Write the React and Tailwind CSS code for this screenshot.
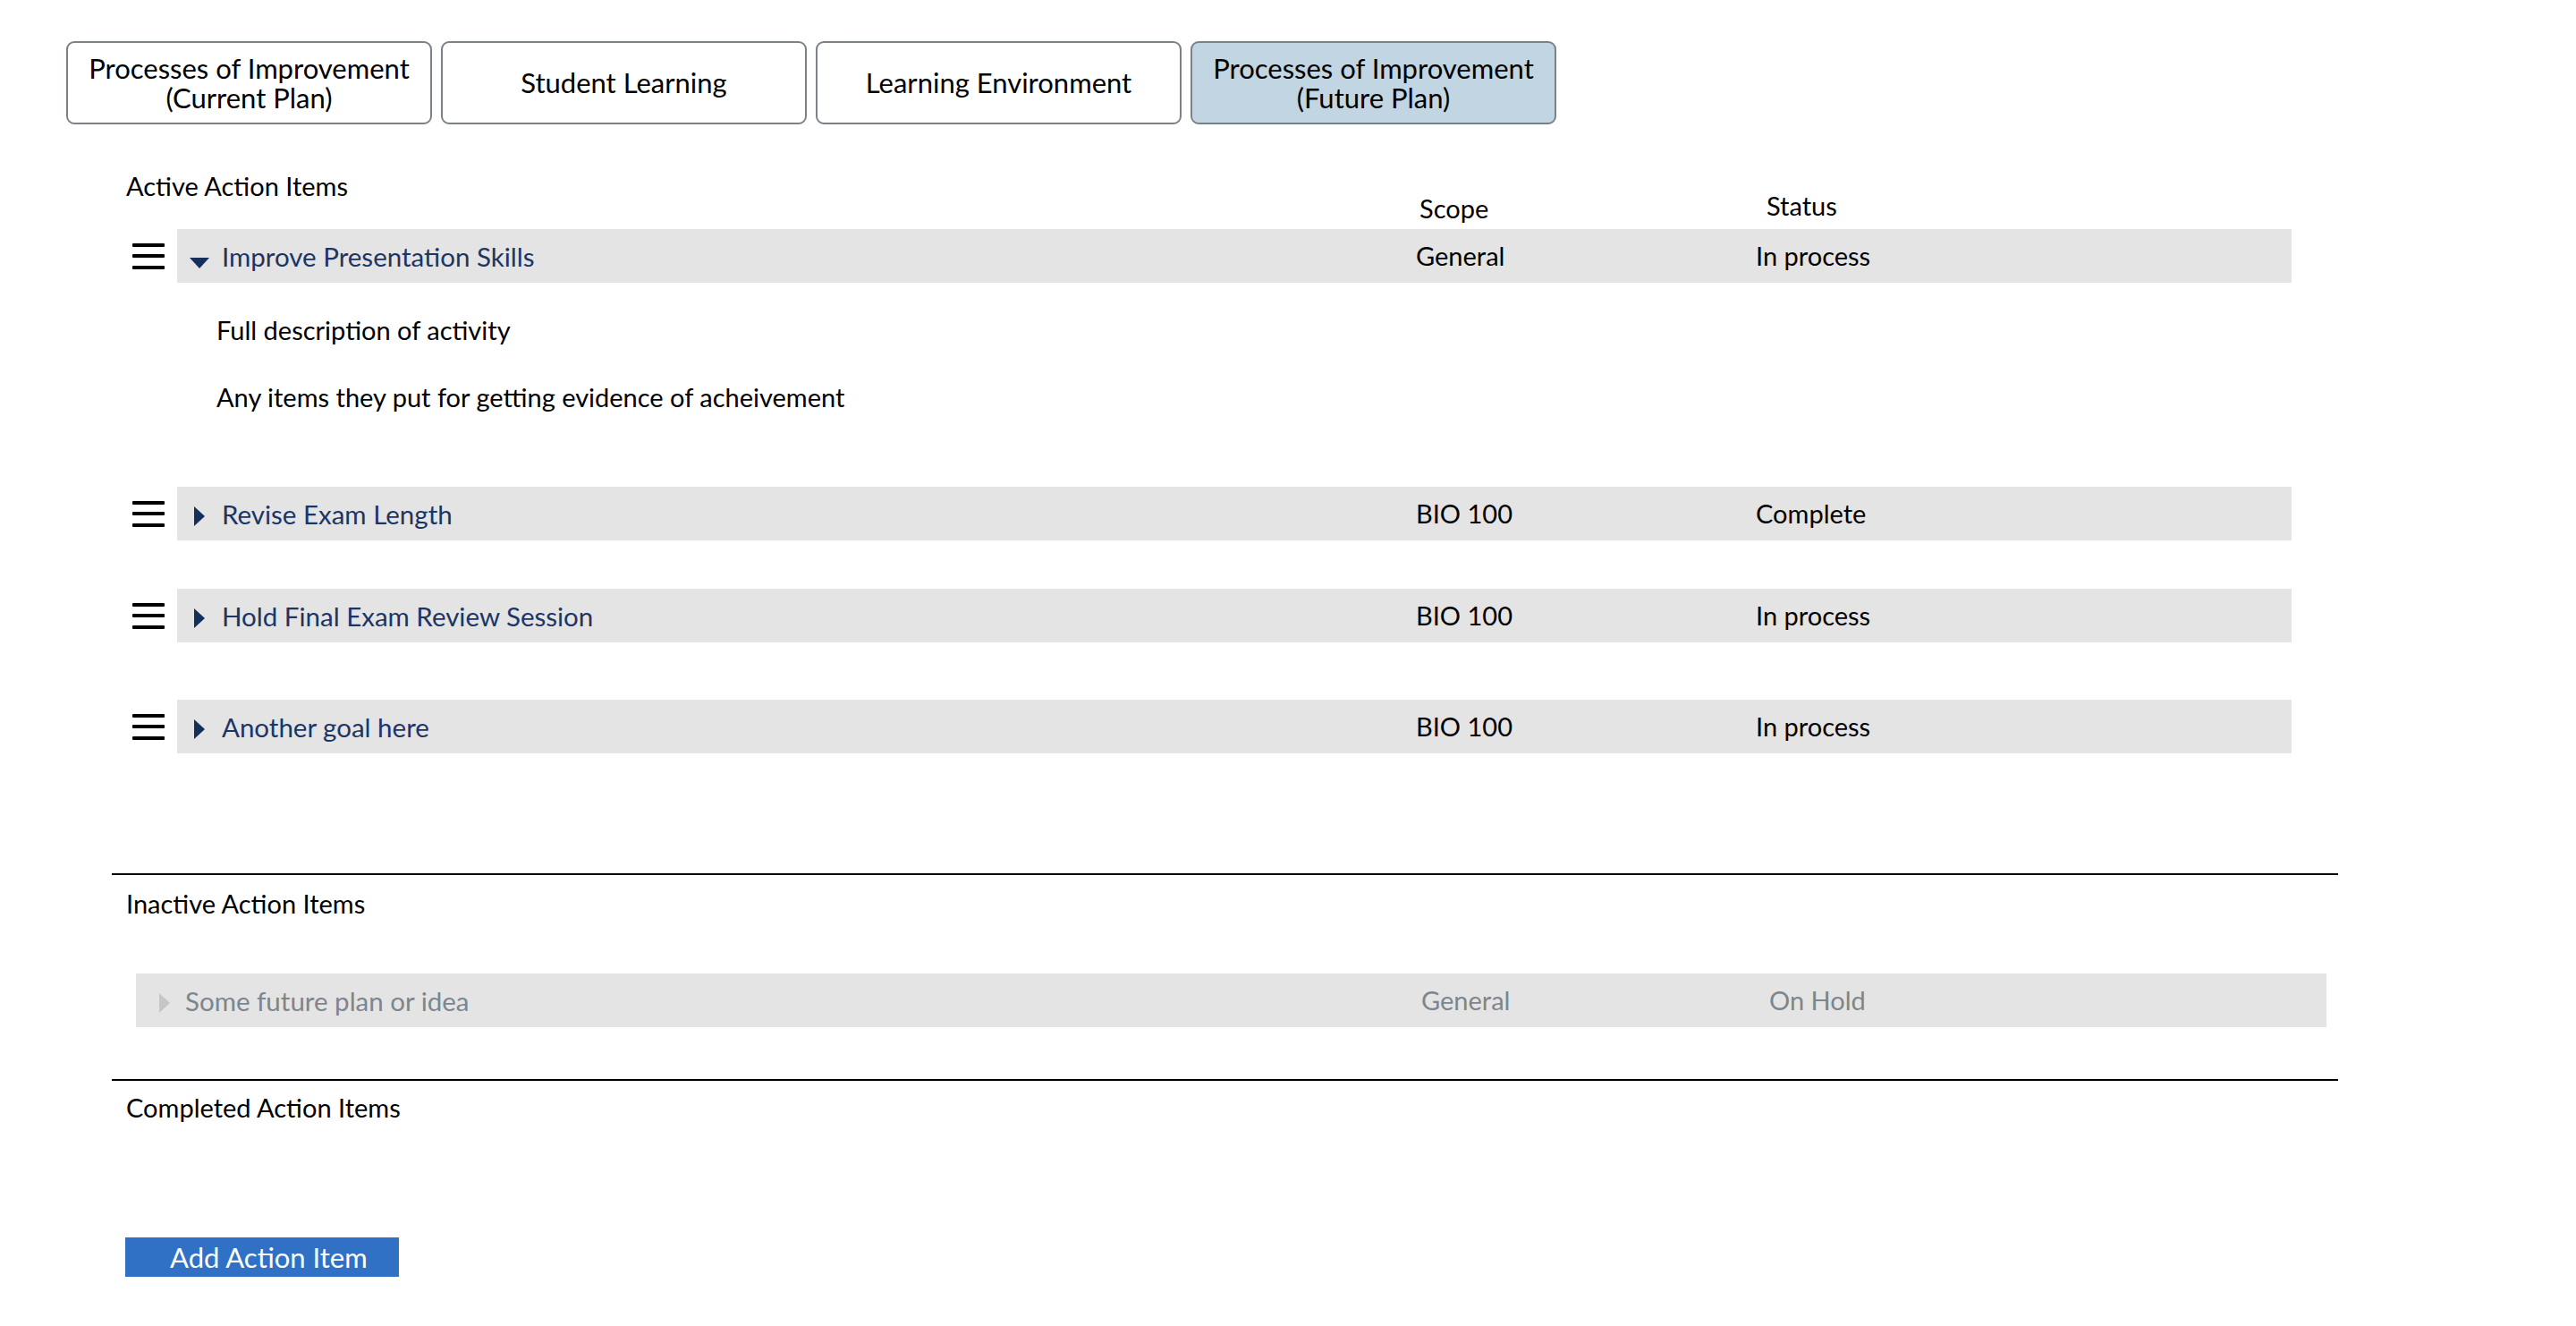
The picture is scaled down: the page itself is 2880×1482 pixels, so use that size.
import { useState } from "react";

const tabs = [
  { label: "Processes of Improvement", sub: "(Current Plan)" },
  { label: "Student Learning" },
  { label: "Learning Environment" },
  { label: "Processes of Improvement", sub: "(Future Plan)", active: true },
];

const activeItems = [
  {
    title: "Improve Presentation Skills",
    scope: "General",
    status: "In process",
    open: true,
    desc: ["Full description of activity", "Any items they put for getting evidence of acheivement"],
  },
  { title: "Revise Exam Length", scope: "BIO 100", status: "Complete", mt: "mt-0" },
  { title: "Hold Final Exam Review Session", scope: "BIO 100", status: "In process", mt: "mt-[54px]" },
  { title: "Another goal here", scope: "BIO 100", status: "In process", mt: "mt-[64px]" },
];

function Hamburger() {
  return (
    <div className="flex flex-col gap-[8.5px] w-[36px] ml-[23px]">
      <div className="h-[4px] bg-black rounded-[1px]"></div>
      <div className="h-[4px] bg-black rounded-[1px]"></div>
      <div className="h-[4px] bg-black rounded-[1px]"></div>
    </div>
  );
}

function Caret({ open, color }) {
  if (open) {
    return (
      <svg width="22" height="12" viewBox="0 0 22 12" className="mt-[16px]">
        <polygon points="0,0 22,0 11,12" fill={color} />
      </svg>
    );
  }
  return (
    <svg width="12" height="22" viewBox="0 0 12 22" className="mt-[6px]">
      <polygon points="0,0 12,11 0,22" fill={color} />
    </svg>
  );
}

function ActiveRow({ item }) {
  return (
    <div className={`${item.mt || ""} flex items-center`}>
      <Hamburger />
      <div className="ml-[14px] w-[2364px] h-[60px] bg-[#e4e4e4] flex items-center">
        <div className="w-[1385px] flex items-center">
          <div className="w-[50px] flex justify-center pl-[14px] pr-[14px]">
            <Caret open={item.open} color="#152f5c" />
          </div>
          <span className="text-[#1c3565] text-[29.5px] mt-[2px]">{item.title}</span>
        </div>
        <div className="w-[380px]">{item.scope}</div>
        <div>{item.status}</div>
      </div>
    </div>
  );
}

export default function App() {
  const [current] = useState(3);

  return (
    <div className="min-h-screen bg-white text-black font-['Lato',sans-serif] text-[29px] leading-[34px]">
      {/* tabs */}
      <div className="flex gap-[10px] pl-[74px] pt-[46px]">
        {tabs.map((t, i) => (
          <div
            key={i}
            className={`w-[409px] h-[93px] border-2 border-[#7b8189] rounded-[9px] flex flex-col items-center justify-center text-center text-[31px] leading-[33px] ${
              i === current ? "bg-[#c1d5e3]" : "bg-white"
            }`}
          >
            <span>{t.label}</span>
            {t.sub && <span>{t.sub}</span>}
          </div>
        ))}
      </div>

      <div className="ml-[125px] w-[2489px]">
        {/* active header */}
        <div className="mt-[52px] h-[65px] flex">
          <div className="w-[1462px] pl-[16px]">Active Action Items</div>
          <div className="w-[388px] mt-[25px]">Scope</div>
          <div className="mt-[22px]">Status</div>
        </div>

        {activeItems.map((item, i) => (
          <div key={i}>
            <ActiveRow item={item} />
            {item.open && (
              <div className="pl-[117px] pt-[36px] pb-[83px] flex flex-col gap-[41px]">
                {item.desc.map((d, j) => (
                  <div key={j}>{d}</div>
                ))}
              </div>
            )}
          </div>
        ))}

        <div className="mt-[134px] border-t-2 border-black"></div>

        {/* inactive */}
        <div className="mt-[15px] pl-[16px]">Inactive Action Items</div>
        <div className="mt-[61px] ml-[27px] w-[2449px] h-[60px] bg-[#e4e4e4] flex items-center text-[#7d858d]">
          <div className="w-[1437px] flex items-center">
            <div className="w-[55px] flex justify-end pr-[17px]">
              <Caret color="#c6c6c6" />
            </div>
            <span className="text-[29.5px] mt-[2px]">Some future plan or idea</span>
          </div>
          <div className="w-[389px]">General</div>
          <div>On Hold</div>
        </div>

        <div className="mt-[58px] border-t-2 border-black"></div>

        {/* completed */}
        <div className="mt-[13px] pl-[16px]">Completed Action Items</div>

        <button className="mt-[128px] ml-[15px] w-[306px] h-[44px] bg-[#3071c6] text-white text-[31px] leading-[44px] pl-[50px] text-left">
          Add Action Item
        </button>
      </div>
    </div>
  );
}
